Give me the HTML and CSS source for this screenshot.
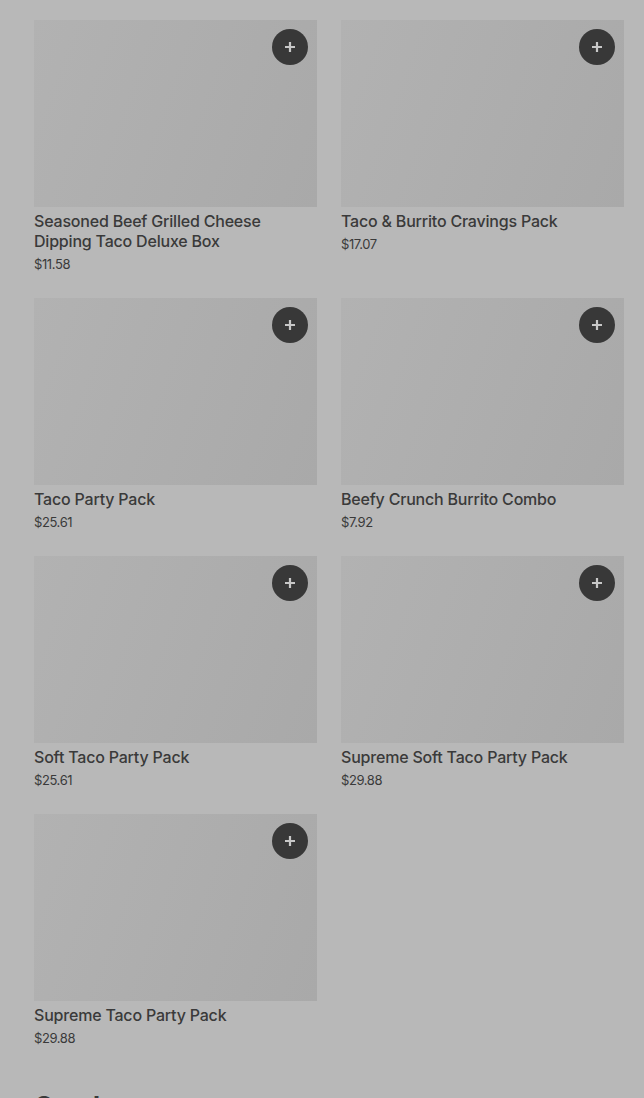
FILE: index.html
```html
<!DOCTYPE html>
<html lang="en">

<head>
    <meta charset="UTF-8">
    <meta name="viewport" content="width=device-width, initial-scale=1.0">
    <title>Menu</title>

    <link rel="stylesheet" href="styles.css">
</head>

<body>
    <div class="menu">
        <div class="grid">
            <div class="item">
                <div class="thumb"><button class="add" type="button"><svg viewBox="0 0 12 12"><path d="M6 1v10M1 6h10"/></svg></button></div>
                <div class="name">Seasoned Beef Grilled Cheese Dipping Taco Deluxe Box</div>
                <div class="price">$11.58</div>
            </div>
            <div class="item">
                <div class="thumb"><button class="add" type="button"><svg viewBox="0 0 12 12"><path d="M6 1v10M1 6h10"/></svg></button></div>
                <div class="name">Taco &amp; Burrito Cravings Pack</div>
                <div class="price">$17.07</div>
            </div>
            <div class="item">
                <div class="thumb"><button class="add" type="button"><svg viewBox="0 0 12 12"><path d="M6 1v10M1 6h10"/></svg></button></div>
                <div class="name">Taco Party Pack</div>
                <div class="price">$25.61</div>
            </div>
            <div class="item">
                <div class="thumb"><button class="add" type="button"><svg viewBox="0 0 12 12"><path d="M6 1v10M1 6h10"/></svg></button></div>
                <div class="name">Beefy Crunch Burrito Combo</div>
                <div class="price">$7.92</div>
            </div>
            <div class="item">
                <div class="thumb"><button class="add" type="button"><svg viewBox="0 0 12 12"><path d="M6 1v10M1 6h10"/></svg></button></div>
                <div class="name">Soft Taco Party Pack</div>
                <div class="price">$25.61</div>
            </div>
            <div class="item">
                <div class="thumb"><button class="add" type="button"><svg viewBox="0 0 12 12"><path d="M6 1v10M1 6h10"/></svg></button></div>
                <div class="name">Supreme Soft Taco Party Pack</div>
                <div class="price">$29.88</div>
            </div>
            <div class="item">
                <div class="thumb"><button class="add" type="button"><svg viewBox="0 0 12 12"><path d="M6 1v10M1 6h10"/></svg></button></div>
                <div class="name">Supreme Taco Party Pack</div>
                <div class="price">$29.88</div>
            </div>
        </div>

        <h2 class="section">Combos</h2>
    </div>
</body>

</html>
```

FILE: styles.css
```css
body {
    margin: 0;
    background-color: #b8b8b8;
    font-family: Inter, "Liberation Sans", sans-serif;
    color: #3a3a3a;
}

.menu {
    padding: 20px 20px 0 34px;
}

.grid {
    display: grid;
    grid-template-columns: 283px 283px;
    column-gap: 24px;
    row-gap: 25px;
}

.thumb {
    position: relative;
    height: 187px;
    background: linear-gradient(110deg, #b2b2b2, #a9a9a9);
}

.add {
    position: absolute;
    top: 9px;
    right: 9px;
    display: flex;
    align-items: center;
    justify-content: center;
    width: 36px;
    height: 36px;
    border: none;
    border-radius: 50%;
    background-color: #383838;
    padding: 0;
}

.add svg {
    width: 12px;
    height: 12px;
    stroke: #c8c8c8;
    stroke-width: 2.2;
    fill: none;
}

.name {
    margin-top: 4px;
    font-size: 16px;
    font-weight: 500;
    line-height: 20px;
    letter-spacing: -0.2px;
}

.price {
    margin-top: 4px;
    font-size: 13px;
    line-height: 18px;
    letter-spacing: -0.4px;
}

.section {
    margin: 43px 0 0;
    font-size: 26px;
    font-weight: 700;
    line-height: 32px;
}
```
